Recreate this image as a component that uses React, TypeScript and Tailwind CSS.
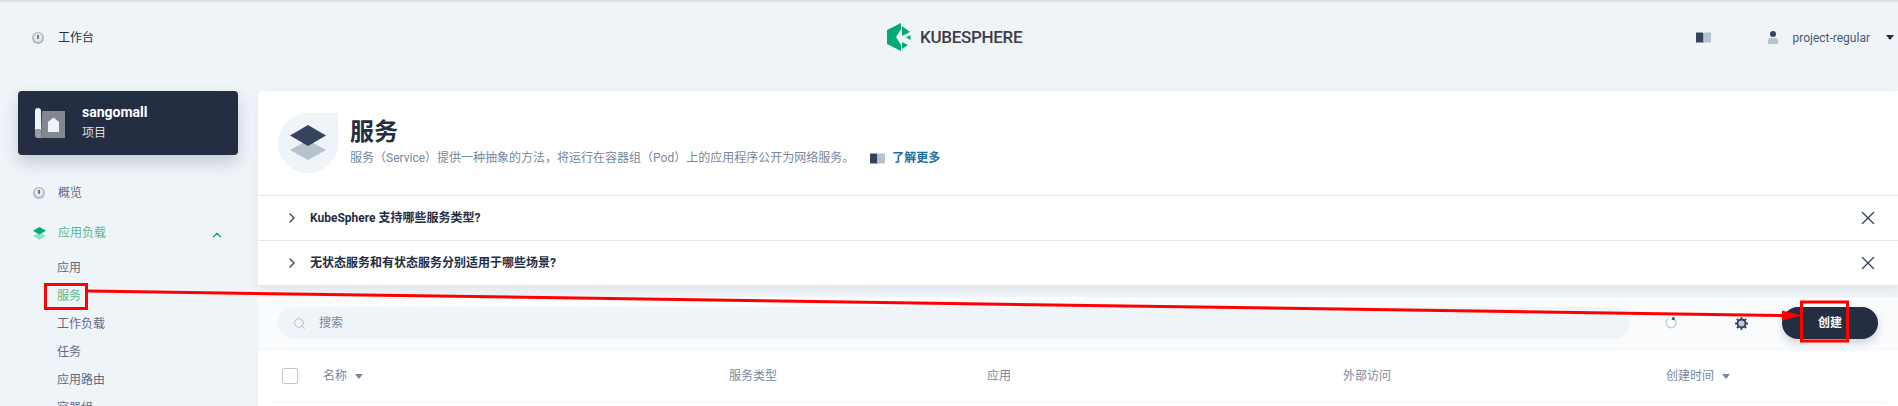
import React from "react";
import { ChevronRight, ChevronUp, X, Search } from "lucide-react";

const Dial = ({ className = "" }: { className?: string }) => (
  <svg width="12" height="12" viewBox="0 0 12 12" className={className}>
    <circle cx="6" cy="6" r="6" fill="#aebac6" />
    <circle cx="6" cy="5.500" r="4.300" fill="#e4e9ef" />
    <path d="M5.300 3h1.400v3.300a.7.7 0 0 1-1.400 0z" fill="#36435c" />
  </svg>
);

const Book = ({ className = "" }: { className?: string }) => (
  <svg width="15" height="11" viewBox="0 0 15 11" className={className}>
    <path d="M0 0.500h6.500l1 1v9.500l-1-.6H0z" fill="#36435c" />
    <path d="M7.500 1.500l1-1H15v10H8.500l-1 .6z" fill="#b6c2cd" />
  </svg>
);

const Caret = ({ color }: { color: string }) => (
  <svg width="8" height="5" viewBox="0 0 8 5" className="shrink-0">
    <path d="M0 0h8L4 5z" fill={color} />
  </svg>
);

const Layers = ({ size, top, bottom }: { size: number; top: string; bottom: string }) => (
  <svg width={size} height={size} viewBox="0 0 36 36">
    <path d="M18 15 36 25 18 35 0 25z" fill={bottom} />
    <path d="M18 0 36 10.500 18 21 0 10.500z" fill={top} />
  </svg>
);

const sub = ["应用", "服务", "工作负载", "任务", "应用路由", "容器组"];
const faq = ["KubeSphere 支持哪些服务类型?", "无状态服务和有状态服务分别适用于哪些场景?"];

export default function App() {
  return (
    <div className="relative w-[1898px] h-[406px] overflow-hidden flex flex-col bg-[#eff4f9] font-['Roboto','Noto_Sans_CJK_SC',sans-serif] text-xs text-[#242e42]">
      <div className="h-[2px] bg-[#dcdfe3] shrink-0" />
      <header className="relative h-[68px] shrink-0 flex items-center justify-between border-b border-[#f2f6fa] pt-[4px]">
        <div className="flex items-center pl-[32px] gap-[14px]">
          <Dial />
          <span>工作台</span>
        </div>
        <div className="absolute left-[887px] top-[21px] flex items-center gap-[8px]">
          <svg width="25" height="28" viewBox="0 0 25 28">
            <path d="M14 0 0 7v14l14 7v-6L9 14l5-8z" fill="#00aa72" />
            <path d="M15 3l8 6-8 4z" fill="#00aa72" />
            <path d="M23.500 12v5L19 14.500z" fill="#00aa72" />
            <path d="M15 19l6 3-6 4z" fill="#00aa72" />
          </svg>
          <span className="text-[17px] font-medium tracking-[-0.3px] text-[#3e3b4a]">KUBESPHERE</span>
        </div>
        <div className="flex items-center pr-[4px]">
          <Book />
          <svg width="12" height="13" viewBox="0 0 12 13" className="ml-[56px]">
            <circle cx="6" cy="3" r="3" fill="#36435c" />
            <path d="M1 13V9.500C1 8 2.500 7 4 7h4c1.500 0 3 1 3 2.500V13z" fill="#b6c2cd" />
          </svg>
          <span className="ml-[14px] text-[#4a5974]">project-regular</span>
          <span className="ml-[16px]"><Caret color="#242e42" /></span>
        </div>
      </header>

      <div className="flex flex-1 min-h-0 pt-[21px]">
        <aside className="w-[258px] shrink-0 pl-[18px]">
          <div className="w-[220px] h-[64px] rounded bg-[#242e42] flex items-center pl-[17px] shadow-[0_8px_16px_rgba(36,46,66,0.2)]">
            <svg width="30" height="30" viewBox="0 0 30 30" className="shrink-0">
              <path d="M7 3h23v27H6z" fill="#83878f" />
              <path d="M0 3a3 3 0 0 1 6 0v21a3 3 0 0 0-6 0z" fill="#eff4f9" />
              <path d="M0 24a3 3 0 0 1 6 0v6H3a3 3 0 0 1-3-3z" fill="#9aa0a9" />
              <path d="M13 14l5.500-4.500L24 14v10H13z" fill="#eff4f9" />
            </svg>
            <div className="ml-[17px] flex flex-col">
              <span className="text-sm font-bold leading-[19px] text-white">sangomall</span>
              <span className="leading-[22px] text-[#d8dee5]">项目</span>
            </div>
          </div>
          <nav className="mt-[24px] pr-[20px] text-[#5f6b85]">
            <div className="h-[28px] pl-[15px] flex items-center gap-[13px]">
              <Dial />
              <span>概览</span>
            </div>
            <div className="mt-[12px] h-[28px] pl-[15px] flex items-center gap-[12px] text-[#55bc8a]">
              <Layers size={13} top="#00aa72" bottom="#90e0c5" />
              <span>应用负载</span>
              <ChevronUp size={14} strokeWidth={2} className="ml-auto mr-[14px] mt-[4px] text-[#00aa72]" />
            </div>
            <ul className="mt-[7px] pl-[39px]">
              {sub.map((s) => (
                <li key={s} className={"h-[28px] leading-[28px] " + (s === "服务" ? "text-[#55bc8a]" : "")}>{s}</li>
              ))}
            </ul>
          </nav>
        </aside>

        <main className="flex-1 min-w-0">
          <div className="shadow-[0_4px_8px_rgba(36,46,66,0.08)] rounded-tl bg-white">
            <section className="h-[105px] flex items-center pl-[20px] border-b border-[#e3e9ef]">
              <div className="w-[60px] h-[60px] shrink-0 rounded-[50%_0_50%_50%] bg-[#eff4f9] flex items-center justify-center">
                <Layers size={36} top="#36435c" bottom="#b6c2cd" />
              </div>
              <div className="ml-[12px] mb-[2px]">
                <h1 className="text-2xl leading-[32px] font-bold text-[#242e42]">服务</h1>
                <p className="flex items-center text-[#79879c] leading-[20px]">
                  <span>服务（Service）提供一种抽象的方法，将运行在容器组（Pod）上的应用程序公开为网络服务。</span>
                  <Book className="ml-[16px]" />
                  <span className="ml-[7px] font-bold text-[#1c6ea4]">了解更多</span>
                </p>
              </div>
            </section>
            {faq.map((q, i) => (
              <div key={q} className={"flex items-center pl-[26px] pr-[19px] " + (i === 0 ? "h-[45px] border-b border-[#e3e9ef]" : "h-[44px]")}>
                <ChevronRight size={16} strokeWidth={2} className="text-[#36435c]" />
                <span className="ml-[10px] font-bold">{q}</span>
                <X size={22} strokeWidth={1.500} className="ml-auto text-[#36435c]" />
              </div>
            ))}
          </div>

          <div className="mt-[12px] h-[53px] bg-[#f9fbfd] border-b border-[#eff4f9] flex items-center pl-[20px] pr-[20px]">
            <div className="w-[1352px] h-[32px] rounded-full bg-[#eff4f9] flex items-center pl-[15px] text-[#79879c]">
              <Search size={13} strokeWidth={1.500} className="text-[#a9b5c2]" />
              <span className="ml-[13px]">搜索</span>
            </div>
            <svg width="12" height="12" viewBox="0 0 12 12" className="ml-[35px]">
              <path d="M8 1.100A5 5 0 1 1 3 1.800" fill="none" stroke="#c1cbd5" strokeWidth="1.300" />
              <path d="M8 0h1.500l0 3.500-3-1z" fill="#36435c" />
            </svg>
            <svg width="13" height="13" viewBox="0 0 14 14" className="ml-[58px]">
              <path d="M7 0v14M0 7h14M2 2l10 10M12 2L2 12" stroke="#36435c" strokeWidth="2" />
              <circle cx="7" cy="7" r="4.300" fill="#c1cbd5" stroke="#36435c" strokeWidth="2" />
            </svg>
            <button className="ml-auto w-[96px] h-[32px] rounded-full bg-[#242e42] text-white font-bold shadow-[0_4px_8px_rgba(36,46,66,0.2)]">创建</button>
          </div>

          <div className="bg-white h-full pl-[12px] pr-[12px]">
            <div className="h-[53px] border-b border-[#eff4f9] flex items-center text-[#79879c]">
              <span className="ml-[12px] w-[16px] h-[16px] rounded-[2px] border border-[#c1c9d1] bg-white shrink-0" />
              <span className="ml-[25px] flex items-center gap-[8px]">名称 <Caret color="#79879c" /></span>
              <span className="absolute left-[729px]">服务类型</span>
              <span className="absolute left-[987px]">应用</span>
              <span className="absolute left-[1343px]">外部访问</span>
              <span className="absolute left-[1666px] flex items-center gap-[8px]">创建时间 <Caret color="#79879c" /></span>
            </div>
          </div>
        </main>
      </div>

      <svg width="1898" height="406" className="absolute inset-0 pointer-events-none">
        <rect x="45.500" y="284.500" width="41" height="24" fill="none" stroke="#ff0000" strokeWidth="3" />
        <path d="M88 291 1785 315.500" stroke="#ff0000" strokeWidth="3" fill="none" />
        <path d="M1782 310.500 1802 315.500 1782 320.500z" fill="#ff0000" />
        <rect x="1801.500" y="302" width="46" height="39" fill="none" stroke="#ff0000" strokeWidth="3" />
      </svg>
    </div>
  );
}
